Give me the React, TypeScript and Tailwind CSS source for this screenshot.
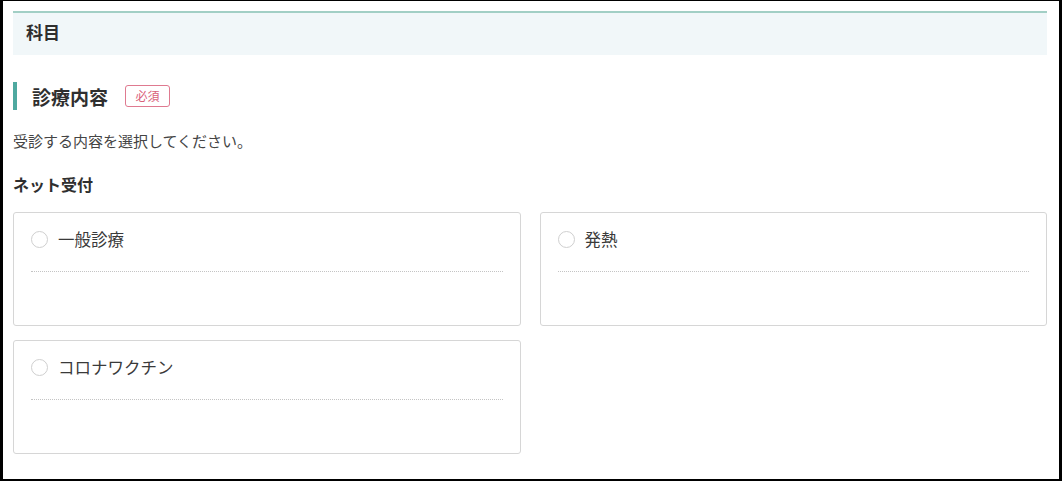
const options = [
  { id: "general", label: "一般診療" },
  { id: "fever", label: "発熱" },
  { id: "vaccine", label: "コロナワクチン" },
];

function OptionCard({ label }: { label: string }) {
  return (
    <label className="block h-[114px] rounded-[3px] border border-[#d6d6d6] bg-white px-[17px] pt-[15px] cursor-pointer">
      <div className="flex h-[22px] items-center gap-[10px]">
        <span className="h-[17px] w-[17px] shrink-0 rounded-full border-[1.5px] border-[#cfcfcf] bg-white" />
        <span className="text-[16.5px] leading-[22px] text-[#3a3a3a]">{label}</span>
      </div>
      <div className="mt-[21px] border-b border-dotted border-[#c4c4c4]" />
    </label>
  );
}

export default function App() {
  return (
    <div
      className="h-[481px] w-[1062px] border-b-2 border-l-[3px] border-r-[3px] border-t border-black bg-white pl-[10px] pr-[12px] pt-[10px] text-[#333]"
      style={{ fontFamily: '"Noto Sans CJK JP", "Noto Sans", sans-serif' }}
    >
      {/* 科目 header */}
      <div className="flex h-[44px] items-center border-t-2 border-[#a2cfc5] bg-[#f1f7f9] pb-[5px] pl-[13px]">
        <h2 className="text-[17px] font-bold leading-none text-[#2f2f2f]">科目</h2>
      </div>

      {/* 診療内容 */}
      <div className="mt-[27px] flex h-[28px] items-center">
        <div className="h-full w-[4px] bg-[#4fa9a0]" />
        <h3 className="ml-[15px] text-[19px] font-bold leading-none text-[#2f2f2f]">診療内容</h3>
        <span className="ml-[17px] flex h-[22px] w-[45px] items-center justify-center rounded-[3px] border-[1.5px] border-[#df7a90] text-[12px] leading-none text-[#d9607a]">
          必須
        </span>
      </div>

      <p className="mt-[21px] text-[15px] leading-[20px] text-[#444]">受診する内容を選択してください。</p>

      <h4 className="mt-[22px] text-[16px] font-bold leading-[22px] text-[#2f2f2f]">ネット受付</h4>

      <div className="mt-[17px] grid grid-cols-2 gap-x-[19px] gap-y-[14px]">
        {options.map((o) => (
          <OptionCard key={o.id} label={o.label} />
        ))}
      </div>
    </div>
  );
}
